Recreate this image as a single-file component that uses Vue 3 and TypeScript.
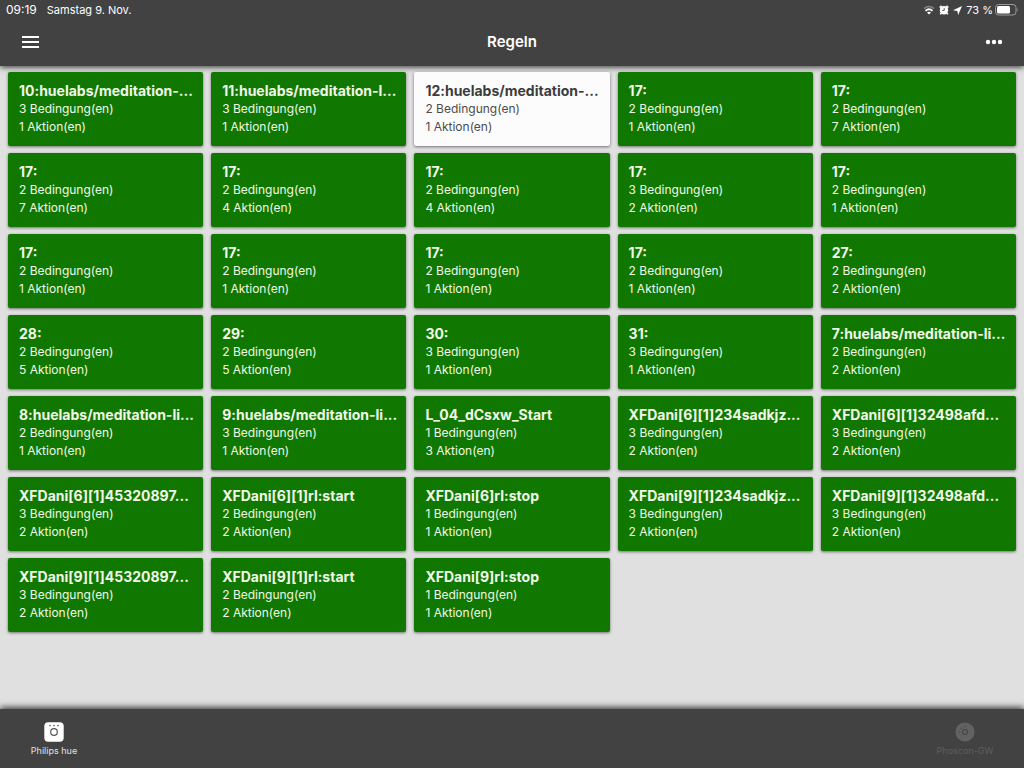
<script setup lang="ts">
interface Rule {
  name: string
  conditions: number
  actions: number
  inactive?: boolean
}

const entries: [string, number, number][] = [
  ['10:huelabs/meditation-...', 3, 1],
  ['11:huelabs/meditation-l...', 3, 1],
  ['12:huelabs/meditation-...', 2, 1],
  ['17:', 2, 1],
  ['17:', 2, 7],
  ['17:', 2, 7],
  ['17:', 2, 4],
  ['17:', 2, 4],
  ['17:', 3, 2],
  ['17:', 2, 1],
  ['17:', 2, 1],
  ['17:', 2, 1],
  ['17:', 2, 1],
  ['17:', 2, 1],
  ['27:', 2, 2],
  ['28:', 2, 5],
  ['29:', 2, 5],
  ['30:', 3, 1],
  ['31:', 3, 1],
  ['7:huelabs/meditation-li...', 2, 2],
  ['8:huelabs/meditation-li...', 2, 1],
  ['9:huelabs/meditation-li...', 3, 1],
  ['L_04_dCsxw_Start', 1, 3],
  ['XFDani[6][1]234sadkjz...', 3, 2],
  ['XFDani[6][1]32498afd...', 3, 2],
  ['XFDani[6][1]45320897...', 3, 2],
  ['XFDani[6][1]rl:start', 2, 2],
  ['XFDani[6]rl:stop', 1, 1],
  ['XFDani[9][1]234sadkjz...', 3, 2],
  ['XFDani[9][1]32498afd...', 3, 2],
  ['XFDani[9][1]45320897...', 3, 2],
  ['XFDani[9][1]rl:start', 2, 2],
  ['XFDani[9]rl:stop', 1, 1],
]

const rules: Rule[] = entries.map(([name, conditions, actions]) => ({
  name,
  conditions,
  actions,
  inactive: name.startsWith('12:'),
}))
</script>

<template>
  <div class="app">
    <header class="top">
      <div class="status">
        <span>09:19</span>
        <span class="date">Samstag 9. Nov.</span>
        <span class="indicators">
          <svg width="12" height="10" viewBox="0 0 12 10" aria-hidden="true">
            <path d="M1 3.6Q6 -.7 11 3.6" fill="none" stroke="#858585" stroke-width="1.5" />
            <path d="M2.5 5.8Q6 2.7 9.5 5.8" fill="none" stroke="#fff" stroke-width="1.7" />
            <path d="M4 7.5Q6 5.8 8 7.5L6 9.6Z" fill="#fff" />
          </svg>
          <svg width="10" height="10" viewBox="0 0 10 10" aria-hidden="true">
            <circle cx="5" cy="5.2" r="4.2" fill="#fff" />
            <path d="M.7 2.6 2.6.7M9.3 2.6 7.4.7M2.2 8 1.2 9.4M7.8 8 8.8 9.4" stroke="#fff" stroke-width="1.5" />
            <path d="M5.2 3V5.5H3.2" fill="none" stroke="#555" stroke-width=".9" />
          </svg>
          <svg width="9" height="9" viewBox="0 0 9 9" aria-hidden="true">
            <path d="M9 0 5.2 9 4.3 4.9 0 4.2Z" fill="#fff" />
          </svg>
          <span class="percent">73 %</span>
          <svg width="24" height="12" viewBox="0 0 24 12" aria-hidden="true">
            <rect x=".5" y=".5" width="20.5" height="10.5" rx="3" fill="none" stroke="#999" />
            <rect x="2" y="2" width="13" height="7.5" rx="1.5" fill="#fff" />
            <path d="M22.3 4Q24 5.7 22.3 7.5Z" fill="#999" />
          </svg>
        </span>
      </div>
      <div class="toolbar">
        <button class="icon-button" type="button" aria-label="Menü">
          <svg width="17" height="12" viewBox="0 0 17 12">
            <path d="M0 1H17M0 6H17M0 11H17" stroke="#fff" stroke-width="1.8" />
          </svg>
        </button>
        <h1>Regeln</h1>
        <button class="icon-button" type="button" aria-label="Mehr">
          <svg width="18" height="6" viewBox="0 0 18 6" fill="#fff">
            <circle cx="3" cy="3" r="2.2" />
            <circle cx="9" cy="3" r="2.2" />
            <circle cx="15" cy="3" r="2.2" />
          </svg>
        </button>
      </div>
    </header>

    <main>
      <article v-for="(rule, i) in rules" :key="i" class="card" :class="{ inactive: rule.inactive }">
        <h2>{{ rule.name }}</h2>
        <p>{{ rule.conditions }} Bedingung(en)</p>
        <p>{{ rule.actions }} Aktion(en)</p>
      </article>
    </main>

    <footer class="tabs">
      <button class="tab" type="button">
        <svg width="20" height="20" viewBox="0 0 20 20" aria-hidden="true">
          <rect x=".3" y=".3" width="19.4" height="19.4" rx="4" fill="#fff" />
          <circle cx="10" cy="10" r="3.3" fill="none" stroke="#555" stroke-width="1.2" />
          <g fill="#555">
            <circle cx="6" cy="3.6" r=".8" />
            <circle cx="10" cy="3.6" r=".8" />
            <circle cx="14" cy="3.6" r=".8" />
          </g>
        </svg>
        <span>Philips hue</span>
      </button>
      <button class="tab dim" type="button">
        <svg width="20" height="20" viewBox="0 0 20 20" aria-hidden="true">
          <circle cx="10" cy="10" r="9.6" fill="#626262" />
          <circle cx="10" cy="10" r="2.5" fill="none" stroke="#464646" stroke-width="1.2" />
          <g fill="#4c4c4c">
            <circle cx="4.6" cy="10" r=".8" />
            <circle cx="6.2" cy="6.2" r=".8" />
            <circle cx="10" cy="4.6" r=".8" />
          </g>
        </svg>
        <span>Phoscon-GW</span>
      </button>
    </footer>
  </div>
</template>

<style>
body {
  margin: 0;
  background: #e0e0e0;
}
</style>

<style scoped>
.app {
  display: flex;
  flex-direction: column;
  min-height: 100vh;
  font-family: Inter, "Liberation Sans", sans-serif;
  color: #fff;
}

h1,
h2,
p {
  margin: 0;
}

button {
  padding: 0;
  border: 0;
  background: none;
  color: inherit;
  font: inherit;
}

.top {
  padding-bottom: 2px;
  background: #424242;
  box-shadow: 0 1px 6px rgba(0, 0, 0, 0.8);
}

.status {
  display: flex;
  align-items: center;
  height: 20px;
  padding: 0 5px 0 6px;
  font-size: 12px;
  line-height: 18px;
}

.date {
  margin-left: 10px;
  font-size: 11px;
}

.indicators {
  display: flex;
  align-items: center;
  gap: 4px;
  margin-left: auto;
  font-size: 11px;
}

.indicators .percent {
  margin-right: -2px;
}

.toolbar {
  display: flex;
  align-items: center;
  justify-content: space-between;
  height: 44px;
  padding: 0 14px;
}

.icon-button {
  display: flex;
  align-items: center;
  justify-content: center;
  width: 32px;
  height: 32px;
}

h1 {
  font-size: 15px;
  font-weight: 600;
  line-height: 20px;
}

main {
  flex: 1;
  display: grid;
  grid-template-columns: repeat(5, minmax(0, 1fr));
  align-content: start;
  gap: 7px 8px;
  padding: 6px 8px 16px;
}

.card {
  padding: 10px 11px;
  border-radius: 2px;
  background: #107800;
  color: #f0f8e8;
  font-size: 12px;
  line-height: 18px;
  box-shadow: 0 1px 3px rgba(0, 0, 0, 0.5);
}

.card h2 {
  font-size: 14px;
  font-weight: 700;
  line-height: 18px;
  white-space: nowrap;
}

.card.inactive {
  background: #fcfcfc;
  color: #4c4c4c;
}

.card.inactive h2 {
  color: #3c3c3c;
}

.tabs {
  display: flex;
  justify-content: space-between;
  height: 59px;
  background: #424242;
  box-shadow: 0 -2px 6px rgba(0, 0, 0, 0.7);
}

.tab {
  display: flex;
  flex-direction: column;
  align-items: center;
  gap: 3px;
  width: 108px;
  padding-top: 13px;
  color: #e0e0e0;
  font-size: 9px;
  line-height: 12px;
}

.tab.dim {
  width: 118px;
  color: #5e5e5e;
}
</style>
